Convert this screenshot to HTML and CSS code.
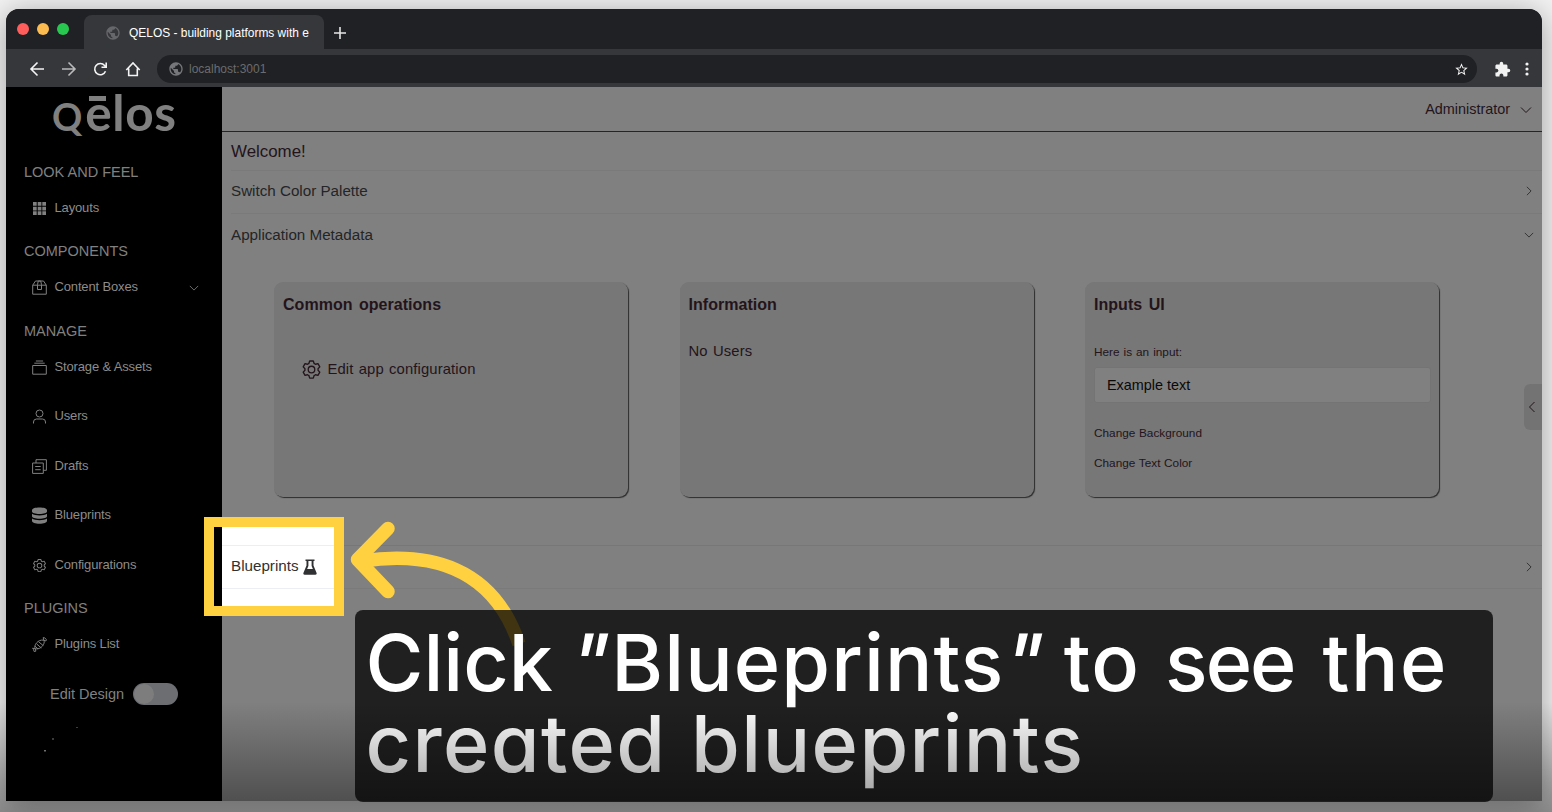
FILE: index.html
```html
<!DOCTYPE html>
<html lang="en">
<head>
<meta charset="utf-8">
<title>QELOS</title>
<link rel="stylesheet" href="styles.css">
</head>
<body>
<svg class="defs" width="0" height="0">
  <defs>
    <symbol id="gear" viewBox="0 0 1024 1024"><path fill="currentColor" d="M600.704 64a32 32 0 0 1 30.464 22.208l35.2 109.376c14.784 7.232 28.928 15.36 42.432 24.512l112.384-24.192a32 32 0 0 1 34.432 15.36L944.32 364.8a32 32 0 0 1-4.032 37.504l-77.12 85.12a357.12 357.12 0 0 1 0 49.024l77.12 85.248a32 32 0 0 1 4.032 37.504l-88.704 153.6a32 32 0 0 1-34.432 15.296L708.8 803.904c-13.44 9.088-27.648 17.28-42.368 24.512l-35.264 109.376A32 32 0 0 1 600.704 960H423.296a32 32 0 0 1-30.464-22.208L357.696 828.48a351.616 351.616 0 0 1-42.56-24.64l-112.32 24.256a32 32 0 0 1-34.432-15.36L79.68 659.2a32 32 0 0 1 4.032-37.504l77.12-85.248a357.12 357.12 0 0 1 0-48.896l-77.12-85.248A32 32 0 0 1 79.68 364.8l88.704-153.6a32 32 0 0 1 34.432-15.296l112.32 24.256c13.568-9.152 27.776-17.408 42.56-24.64l35.2-109.312A32 32 0 0 1 423.232 64H600.64zm-23.424 64H446.72l-36.352 113.088-24.512 11.968a294.113 294.113 0 0 0-34.816 20.096l-22.656 15.36-116.224-25.088-65.28 113.152 79.68 88.192-1.92 27.136a293.12 293.12 0 0 0 0 40.192l1.92 27.136-79.808 88.192 65.344 113.152 116.224-25.024 22.656 15.296a294.113 294.113 0 0 0 34.816 20.096l24.512 11.968L446.72 896h130.688l36.48-113.152 24.448-11.904a288.282 288.282 0 0 0 34.752-20.096l22.592-15.296 116.288 25.024 65.28-113.152-79.744-88.192 1.92-27.136a293.12 293.12 0 0 0 0-40.256l-1.92-27.136 79.808-88.128-65.344-113.152-116.288 24.96-22.592-15.232a287.616 287.616 0 0 0-34.752-20.096l-24.448-11.904L577.344 128zM512 320a192 192 0 1 1 0 384 192 192 0 0 1 0-384zm0 64a128 128 0 1 0 0 256 128 128 0 0 0 0-256z"/></symbol>
    <symbol id="globe" viewBox="0 0 24 24"><path fill="currentColor" d="M12 2C6.48 2 2 6.48 2 12s4.480 10 10 10 10-4.480 10-10S17.520 2 12 2zm-1 17.930c-3.950-.490-7-3.850-7-7.930 0-.620.080-1.210.210-1.790L9 15v1c0 1.100.900 2 2 2v1.930zm6.900-2.540c-.260-.810-1-1.390-1.900-1.390h-1v-3c0-.550-.450-1-1-1H8v-2h2c.550 0 1-.450 1-1V7h2c1.100 0 2-.900 2-2v-.410c2.930 1.190 5 4.060 5 7.410 0 2.080-.800 3.970-2.100 5.390z"/></symbol>
    <symbol id="chev" viewBox="0 0 12 12"><path d="M1 3.500 6 8.500 11 3.500" fill="none" stroke="currentColor"/></symbol>
  </defs>
</svg>

<div class="window">
  <div class="tabbar">
    <div class="lights"><i class="red"></i><i class="amber"></i><i class="green"></i></div>
    <div class="tab"><svg class="tab-globe"><use href="#globe"/></svg><span>QELOS - building platforms with e</span></div>
    <svg class="plus" viewBox="0 0 12 12"><path d="M6 0v12M0 6h12" stroke="#e6e6e6" stroke-width="1.600"/></svg>
  </div>
  <div class="toolbar">
    <svg class="nav" viewBox="0 0 16 16"><path d="M15 8H2M8.500 1.500 2 8l6.500 6.500"/></svg>
    <svg class="nav dim" viewBox="0 0 16 16"><path d="M1 8h13M7.500 1.500 14 8l-6.500 6.500"/></svg>
    <svg class="nav" viewBox="0 0 16 16"><path d="M12.500 10.200A5.600 5.600 0 1 1 11.600 4.500L13 6M13.200 1.500V6.200H8.500"/></svg>
    <svg class="nav" viewBox="0 0 16 16"><path d="M1.300 9 8 2l6.700 7M3.700 7.500v7h8.600v-7"/></svg>
    <div class="url"><svg class="url-globe"><use href="#globe"/></svg><span>localhost:3001</span>
      <svg class="star" viewBox="0 0 24 24"><path fill="#f2f2f2" d="M22 9.240l-7.190-.620L12 2 9.190 8.630 2 9.240l5.460 4.730L5.820 21 12 17.270 18.180 21l-1.630-7.030L22 9.240zM12 15.400l-3.760 2.270 1-4.280-3.320-2.880 4.380-.380L12 6.100l1.710 4.040 4.380.380-3.320 2.880 1 4.280L12 15.400z"/></svg>
    </div>
    <svg class="puzzle" viewBox="0 0 24 24"><path fill="#f2f2f2" d="M20.500 11H19V7c0-1.100-.900-2-2-2h-4V3.500a2.500 2.500 0 0 0-5 0V5H4c-1.100 0-1.990.900-1.990 2v3.800H3.500c1.490 0 2.700 1.210 2.700 2.700s-1.210 2.700-2.700 2.700H2V20c0 1.100.900 2 2 2h3.800v-1.500c0-1.490 1.210-2.700 2.700-2.700 1.490 0 2.700 1.210 2.700 2.700V22H17c1.100 0 2-.900 2-2v-4h1.500a2.500 2.500 0 0 0 0-5z"/></svg>
    <svg class="dots" viewBox="0 0 4 14"><g fill="#f2f2f2"><circle cx="2" cy="2" r="1.600"/><circle cx="2" cy="7" r="1.600"/><circle cx="2" cy="12" r="1.600"/></g></svg>
  </div>

  <div class="app">
    <aside class="sidebar">
      <div class="logo"><span class="logo-q">Q</span><span class="logo-rest"><span class="logo-e">e</span>los</span></div>
      <h4>LOOK AND FEEL</h4>
      <a class="item"><svg class="solid" viewBox="0 0 15 15"><path fill="currentColor" d="M1 1h3.700v3.700H1zM5.700 1h3.700v3.700H5.700zM10.300 1H14v3.700h-3.700zM1 5.700h3.700v3.700H1zM5.700 5.700h3.700v3.700H5.700zM10.300 5.700H14v3.700h-3.700zM1 10.300h3.700V14H1zM5.700 10.300h3.700V14H5.700zM10.300 10.300H14V14h-3.700z"/></svg><span>Layouts</span></a>
      <h4>COMPONENTS</h4>
      <a class="item"><svg viewBox="0 0 15 15"><path d="M.700 5.200h13.600v9H.700zM.700 5.200 3.500 1h8l2.800 4.200M5.500 9.500v-5L6.300 1h2.400l.800 3.500v5z"/></svg><span>Content Boxes</span><svg class="chev" viewBox="0 0 12 12"><use href="#chev"/></svg></a>
      <h4>MANAGE</h4>
      <a class="item"><svg viewBox="0 0 15 15"><path d="M.700 5.500h13.600v8.700H.700zM2.300 3.200h10.400M3.900 1h7.200"/></svg><span>Storage &amp; Assets</span></a>
      <a class="item"><svg viewBox="0 0 15 15"><circle cx="7.500" cy="4.500" r="3.500"/><path d="M1.500 14.500v-1.500a3 3 0 0 1 3-3h6a3 3 0 0 1 3 3v1.500"/></svg><span>Users</span></a>
      <a class="item"><svg viewBox="0 0 15 15"><path d="M.600 4h10.700v10.400H.600zM4 4V.700h10.400v10.600h-3M3.200 7.500h5.500M3.200 10.700h5.500"/></svg><span>Drafts</span></a>
      <a class="item"><svg class="solid db" viewBox="0 0 15 17"><path fill="currentColor" d="M0 3.200C0 1.400 3.300.500 7.500.500S15 1.400 15 3.200v1.300C15 5.900 11.700 7 7.500 7S0 5.900 0 4.500zM0 6.800C1.500 8 4.500 8.500 7.500 8.500S13.500 8 15 6.800v2.500c0 1.400-3.300 2.500-7.500 2.500S0 10.700 0 9.300zM0 11.600c1.500 1.200 4.500 1.700 7.500 1.700s6-.500 7.500-1.700V14c0 1.500-3.300 2.700-7.500 2.700S0 15.500 0 14z"/></svg><span>Blueprints</span></a>
      <a class="item"><svg class="solid" viewBox="0 0 15 15"><use href="#gear"/></svg><span>Configurations</span></a>
      <h4>PLUGINS</h4>
      <a class="item"><svg viewBox="0 0 15 15"><path d="M3.200 11.800C1.300 8.500 6 2 11.800 3.200 13.700 6.500 9 13 3.200 11.800zM3.200 11.800.600 11.200l1 1.500.600 1.900 1.700-.500zM11.800 3.200 11.200.600l1.500.300 1.700 1.600-.500 1.500zM4.600 6.900l4.700 4.100M6.600 4.800l4.600 3.700M3 9.200l3 2.700"/></svg><span>Plugins List</span></a>
      <div class="design"><span>Edit Design</span><i class="switch"></i></div>
      <svg class="specks" viewBox="0 0 40 30"><path fill="#888" d="M1 24h2v1.500H1zM9 12.500h2v1H9zM33 1.500h2v.600h-2z"/></svg>
    </aside>

    <main class="main">
      <header class="top"><span>Administrator</span><svg class="chev-admin"><use href="#chev"/></svg></header>
      <div class="welcome">Welcome!</div>
      <div class="row"><span>Switch Color Palette</span><svg class="chev-row right"><use href="#chev"/></svg></div>
      <div class="row open"><span>Application Metadata</span><svg class="chev-row"><use href="#chev"/></svg></div>
      <div class="cards">
        <section class="card"><h3>Common operations</h3><div class="op"><svg><use href="#gear"/></svg><span>Edit app configuration</span></div></section>
        <section class="card"><h3>Information</h3><p class="users">No Users</p></section>
        <section class="card"><h3>Inputs UI</h3><label>Here is an input:</label><div class="field">Example text</div><p class="small">Change Background</p><p class="small">Change Text Color</p></section>
      </div>
      <div class="row last"><svg class="chev-row right"><use href="#chev"/></svg></div>
      <div class="handle"><svg><use href="#chev"/></svg></div>
    </main>
  </div>
</div>

<div class="focus"><div class="focus-row"><span>Blueprints</span><svg viewBox="0 0 14 16"><path fill="#303133" d="M2.500.500h9V2h-1v4.500L13.600 14c.300 1-.300 1.700-1.200 1.700H1.600C.700 15.700.100 15 .400 14L3.500 6.500V2h-1z"/><path fill="#fff" d="M5.400 2h3.200v5l1.300 3H4.100l1.300-3z"/></svg></div></div>
<svg class="arrow" viewBox="340 510 200 150"><path d="M388 528.500 357.500 559.500 388 591.500" stroke-width="13.500"/><path class="tail" d="M362 561C430 551 493 567 519 644" stroke-width="13.500"/></svg>
<div class="caption">
  <div class="line"><span>Click</span> <span class="quoted"><i class="quote">"</i>Blueprints<i class="quote">"</i></span> <span class="to">to</span> <span class="see">see</span> <span class="the">the</span></div>
  <div class="line"><span class="created">created</span> <span class="blueprints">blueprints</span></div>
</div>
<div class="fade"></div>
</body>
</html>
```
FILE: styles.css
```css
* { box-sizing: border-box; }
body { margin: 0; width: 1552px; height: 812px; overflow: hidden; position: relative; background: #f2f2f2; font-family: "Liberation Sans", Arial, sans-serif; padding: 9px 10px 0 6px; }
svg { display: block; flex: none; }
.defs { position: absolute; }
h3, h4, p { margin: 0; font-weight: 400; }

.window { width: 1536px; height: 792px; border-radius: 13px 13px 0 0; overflow: hidden; box-shadow: 0 4px 30px rgba(0,0,0,.34); background: #202124; }
.tabbar { height: 40px; display: flex; align-items: flex-end; background: #202124; }
.lights { display: flex; gap: 8px; width: 78px; padding: 0 0 14px 11px; }
.lights i { width: 12px; height: 12px; border-radius: 50%; }
.red { background: #ff5c5c; } .amber { background: #fdbc4f; } .green { background: #28c850; }
.tab { width: 240px; height: 34px; border-radius: 8px 8px 0 0; background: #36373b; display: flex; align-items: center; padding: 1px 0 0 21px; gap: 8px; color: #fff; font-size: 11.950px; white-space: nowrap; }
.tab-globe { width: 16px; height: 16px; color: #66676b; }
.plus { width: 12px; height: 12px; margin: 0 0 10px 10px; }
.toolbar { height: 38px; background: #36373b; display: flex; align-items: center; padding: 2px 13px 0 23px; }
.nav { width: 16px; height: 16px; margin-right: 16px; fill: none; stroke: #f4f4f4; stroke-width: 1.600; }
.nav.dim { stroke: #b9babc; }
.url { width: 1320px; height: 28px; margin: -1px 17px 0 0; border-radius: 14px; background: #202124; color: #6b6c6e; display: flex; align-items: center; font-size: 12px; padding: 0 8px 0 11px; gap: 5px; }
.url-globe { width: 16px; height: 16px; color: #76777a; }
.star { width: 15px; height: 15px; margin: 1px 0 0 auto; }
.puzzle { width: 17px; height: 17px; }
.dots { width: 4px; height: 14px; margin-left: 14px; }

.app { display: flex; height: 714px; }
.sidebar { width: 216px; background: #000; color: #808080; }
.logo { height: 66.250px; padding-left: 46px; line-height: 50px; font-family: Lato, sans-serif; font-weight: 700; white-space: nowrap; }
.logo-q { font-size: 37.500px; }
.logo-rest { font-size: 49.500px; letter-spacing: .600px; margin-left: 3px; }
.logo-e { position: relative; }
.logo-e::before { content: ""; position: absolute; left: 4px; top: 14px; width: 17px; height: 5px; background: #808080; }
h4 { height: 30px; padding: 8.500px 0 0 18px; line-height: 21.500px; font-size: 14.500px; }
.item { height: 49.500px; display: flex; align-items: center; padding: 0 23px 0 26px; gap: 7.500px; font-size: 13px; letter-spacing: -.150px; color: #8c8c8c; }
.item span { position: relative; top: -.600px; }
.item svg { width: 15px; height: 15px; fill: none; stroke: currentColor; stroke-width: 1; color: #808080; }
.item svg.solid { stroke: none; }
.item svg.db { height: 17px; }
.item svg.chev { width: 10px; height: 10px; margin-left: auto; }
.design { height: 49.500px; display: flex; align-items: center; padding-left: 44px; gap: 9px; font-size: 14.500px; }
.switch { width: 45px; height: 22px; border-radius: 11px; background: #6c6e72; padding: 1px; }
.switch::before { content: ""; display: block; width: 20px; height: 20px; border-radius: 50%; background: #7d7d7d; }
.specks { width: 40px; height: 30px; margin: 7px 0 0 37px; }

.main { flex: 1; position: relative; background: #808080; color: #23141b; padding-left: 9px; }
.top { height: 45px; margin-left: -9px; border-bottom: 1px solid #272424; display: flex; justify-content: flex-end; align-items: center; gap: 10px; padding-right: 10px; font-size: 14.400px; }
.chev-admin { width: 12px; height: 12px; margin-top: 1px; }
.welcome { height: 39px; line-height: 40px; font-size: 16.900px; border-bottom: 1px solid #7a7a7a; }
.row { height: 43px; display: flex; align-items: center; font-size: 15.200px; color: #242527; border-bottom: 1px solid #7a7a7a; padding: 0 8px 3px 0; }
.row.open { border: 0; }
.chev-row { width: 10px; height: 10px; margin: 0 0 -1px auto; }
.right { transform: rotate(-90deg); }
.cards { height: 288px; padding: 25px 0 0 43px; display: flex; gap: 51.500px; }
.card { width: 354px; height: 215px; border-radius: 9px; background: #777; box-shadow: 1px 1px 1px #2c2c2c; padding: 12px 9px 0; }
.card h3 { font-weight: 700; font-size: 16px; line-height: 22px; word-spacing: 2px; letter-spacing: .030px; }
.op { display: flex; align-items: center; gap: 6px; padding: 41.500px 0 0 17.500px; font-size: 14.800px; letter-spacing: .130px; word-spacing: 1px; line-height: 22px; }
.op svg { width: 21px; height: 21px; position: relative; top: 1px; }
.users { margin-top: 24px; font-size: 14.800px; line-height: 22px; letter-spacing: .150px; word-spacing: 1px; }
label { display: block; margin-top: 27px; font-size: 11.800px; line-height: 18px; word-spacing: .700px; }
.field { height: 36px; width: 337px; margin: 6px 0 20px; background: #808080; border: 1px solid #747474; border-radius: 3px; font-size: 14.400px; line-height: 34px; padding-left: 12px; color: #090909; }
.small { font-size: 11.800px; line-height: 20px; margin-bottom: 9.500px; word-spacing: .400px; }
.row.last { height: 44px; border-top: 1px solid #777; padding-bottom: 2px; }
.handle { position: absolute; right: 0; top: 297px; width: 18px; height: 46px; border-radius: 6px 0 0 6px; background: #737373; display: flex; align-items: center; padding-left: 2px; }
.handle svg { width: 12px; height: 12px; transform: rotate(90deg); }

.focus { position: absolute; left: 204px; top: 517px; width: 140px; height: 99px; border: 10px solid #ffd141; background: linear-gradient(90deg, #000 8px, #fff 8px); padding: 18px 0 0 8px; }
.focus-row { height: 44px; border: solid #ebeef5; border-width: 1px 0; display: flex; align-items: center; gap: 4px; padding: 0 0 3px 9px; font-size: 15.200px; color: #303133; }
.focus-row svg { width: 14px; height: 16px; margin-top: 3px; }
.arrow { position: absolute; left: 340px; top: 510px; width: 200px; height: 150px; fill: none; stroke: #ffd141; stroke-linecap: round; stroke-linejoin: round; }
.tail { stroke-linecap: butt; }
.caption { position: absolute; left: 355px; top: 610px; width: 1138px; height: 191.500px; border-radius: 8px; background: rgba(0,0,0,.75); color: #fff; font: 500 79px/81px Inter, sans-serif; font-feature-settings: "cv11"; padding: 12px 0 0 10.500px; white-space: nowrap; }
.line { height: 81px; }
.line span { display: inline-block; height: 81px; vertical-align: top; }
.quote { display: inline-block; font-style: normal; transform: skewX(-12deg); }
.quoted { letter-spacing: 1.100px; margin-left: -3px; }
.to { letter-spacing: 1.500px; margin-left: -2px; }
.see { letter-spacing: -2px; margin-left: 3.500px; }
.the { letter-spacing: 1.500px; margin-left: 7px; }
.created { letter-spacing: 1.400px; }
.blueprints { letter-spacing: 1.400px; margin-left: 3.500px; }
.fade { position: absolute; left: 0; top: 702px; width: 1552px; height: 110px; background: linear-gradient(rgba(0,0,0,0), rgba(0,0,0,.42)); }
```
